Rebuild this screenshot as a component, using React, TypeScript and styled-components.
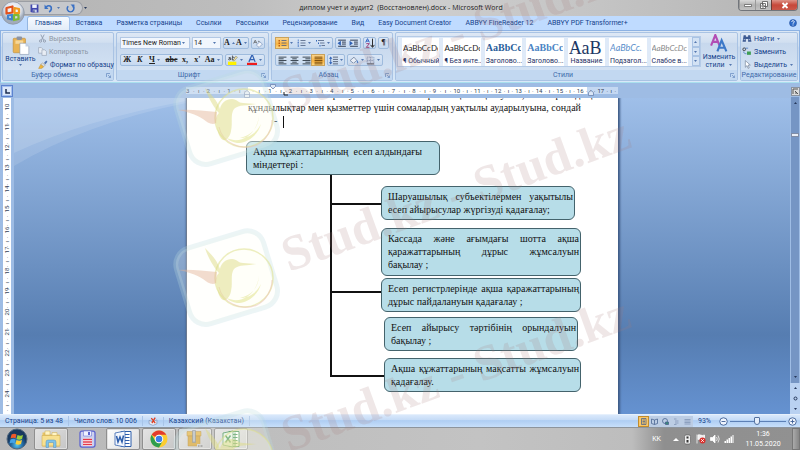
import React from 'react';
import styled, { createGlobalStyle, css } from 'styled-components';

const Global = createGlobalStyle`
  * { box-sizing: border-box; }
  body { margin: 0; font-family: Roboto, "Open Sans", sans-serif; font-size: 7px; line-height: 10px; color: #15428b; overflow: hidden; }
  button, select, input { font: inherit; color: inherit; margin: 0; padding: 0; border: 0; background: none; }
  svg { display: block; flex: none; }
`;

const Shell = styled.div`
  position: relative;
  display: flex;
  flex-direction: column;
  height: 100vh;
  overflow: hidden;
`;

/* ---------- title bar ---------- */
const TitleBar = styled.header`
  position: relative;
  display: flex;
  align-items: center;
  height: 16px;
  flex: none;
  padding-right: 2px;
  background: linear-gradient(90deg, #b4b4b4, #bdbdbd 30%, #cfcfcf 50%, #c4c4c4 75%, #b4b4b4);
`;
const QuickAccess = styled.div`
  display: flex;
  align-items: center;
  gap: 5px;
  height: 14px;
  margin-left: 18px;
  padding: 0 7px 0 12px;
  border: 1px solid #9b9ea4;
  border-left: 0;
  border-radius: 0 8px 8px 0;
  background: #c6c8cc;
`;
const PlainButton = styled.button`
  display: flex;
  align-items: center;
  justify-content: center;
  gap: 3px;
`;
const DocTitle = styled.h1`
  flex: 1;
  margin: 0;
  padding-right: 24px;
  font: 400 7px/16px "Open Sans", sans-serif;
  text-align: center;
  color: #222;
`;
const WindowButtons = styled.div`
  display: flex;
  align-self: flex-start;
  height: 11px;
  border: 1px solid #71757b;
  border-top: 0;
  border-radius: 0 0 4px 4px;
  overflow: hidden;
`;
const WindowButton = styled.button<{ $close?: boolean }>`
  display: grid;
  place-items: center;
  width: ${p => (p.$close ? 26 : 16)}px;
  border-left: ${p => (p.$close ? '1px solid #6b3a34' : '1px solid #999')};
  background: ${p => (p.$close ? 'linear-gradient(#dd9488, #c7483a 50%, #c9584a)' : 'linear-gradient(#d9d9d9, #b3b3b3 50%, #c2c2c2)')};
`;
const OfficeButton = styled.button`
  position: absolute;
  left: 1px;
  top: 1px;
  z-index: 3;
`;

/* ---------- tabs ---------- */
const Tabs = styled.nav`
  display: flex;
  align-items: flex-end;
  height: 14px;
  flex: none;
  padding: 0 3px 0 28px;
  background: #bfdbff;
`;
const Tab = styled.button<{ $active?: boolean }>`
  height: 13px;
  padding: 0 7px;
  line-height: 13px;
  white-space: nowrap;
  border-radius: 2px 2px 0 0;
  ${p => p.$active && css`
    background: linear-gradient(#f6faff, #e2ecf8);
    box-shadow: 0 0 0 1px #93b6e2;
    clip-path: inset(-1px -1px 0 -1px);
  `}
`;
const HelpButton = styled.button`
  margin: 0 0 3px auto;
`;

/* ---------- ribbon ---------- */
const Ribbon = styled.div`
  display: flex;
  gap: 2px;
  height: 53px;
  flex: none;
  padding: 1px;
  border: 1px solid #8db2e3;
  border-bottom-color: #a9e0ee;
  background: linear-gradient(#dbe7f5, #cfdff1 30%, #c5d7ec 31%, #d8e8f8);
`;
const Group = styled.section<{ $w?: number }>`
  display: flex;
  flex-direction: column;
  flex: ${p => (p.$w ? `0 0 ${p.$w}px` : '1 1 0')};
  min-width: 0;
  border: 1px solid #a9c3e4;
  border-radius: 2px;
  background: linear-gradient(#dee8f5, #d1dff0 20%, #c7d8ed 21%, #d7e5f5);
`;
const GroupBody = styled.div<{ $row?: boolean }>`
  display: flex;
  flex: 1;
  min-width: 0;
  flex-direction: ${p => (p.$row ? 'row' : 'column')};
  justify-content: ${p => (p.$row ? 'flex-start' : 'center')};
  align-items: ${p => (p.$row ? 'center' : 'stretch')};
  gap: ${p => (p.$row ? 1 : 5)}px;
  padding: 0 ${p => (p.$row ? 1 : 3)}px;
`;
const GroupFoot = styled.footer`
  display: flex;
  align-items: center;
  height: 10px;
  color: #3e6aaa;
  background: #c2d8f1;
  white-space: nowrap;
`;
const GroupName = styled.span`
  flex: 1;
  text-align: center;
`;
const FootButton = styled.button`
  padding-right: 2px;
`;
const BigButton = styled.button<{ $w: number }>`
  display: flex;
  flex-direction: column;
  align-items: center;
  flex: none;
  width: ${p => p.$w}px;
  line-height: 8px;
`;
const CommandList = styled.div`
  display: flex;
  flex-direction: column;
  gap: 3px;
`;
const Command = styled.button`
  display: flex;
  align-items: center;
  gap: 2px;
  height: 10px;
  white-space: nowrap;
  &:disabled { color: #8e98a6; }
`;
const ToolRow = styled.div`
  display: flex;
  gap: 2px;
  height: 12px;
`;
const Cluster = styled.div<{ $grow?: boolean }>`
  display: flex;
  flex: ${p => (p.$grow ? '1 1 0' : 'none')};
  justify-content: space-around;
  border: 1px solid #9ebbdd;
  border-radius: 2px;
  background: linear-gradient(#dbe7f6, #c6d9f0);
`;
const Tool = styled.button<{ $on?: boolean; $w?: number }>`
  display: flex;
  align-items: center;
  justify-content: center;
  gap: 1px;
  width: ${p => p.$w || 12}px;
  color: #222;
  font: 700 8px/10px "Liberation Serif", serif;
  ${p => p.$on && css`background: linear-gradient(#fbd48c, #f9b23f 60%, #fdd783); box-shadow: 0 0 0 1px #c9a25c;`}
`;
const Combo = styled.label<{ $w: number }>`
  display: flex;
  align-items: center;
  width: ${p => p.$w}px;
  padding: 0 3px 0 1px;
  border: 1px solid #b2c8e5;
  background: #f1f6fd;
  select { flex: 1; min-width: 0; appearance: none; color: #222; outline: none; }
`;
const Gallery = styled.div`
  display: flex;
  align-items: center;
  gap: 4px;
  flex: 1 1 0;
  min-width: 0;
  height: 31px;
  padding-left: 4px;
  border: 1px solid #b5cbe7;
  background: #dfeaf8;
`;
const StyleTile = styled.button`
  display: flex;
  flex-direction: column;
  justify-content: space-between;
  flex: 1 1 0;
  min-width: 0;
  height: 28px;
  padding: 2px 1px 1px;
  background: #fff;
  overflow: hidden;
`;
const Sample = styled.span<{ $size: number; $color: string; $serif?: boolean; $italic?: boolean }>`
  width: 100%;
  height: 16px;
  line-height: 16px;
  text-align: left;
  white-space: nowrap;
  overflow: hidden;
  font-family: ${p => (p.$serif ? '"Liberation Serif", serif' : 'Lato, sans-serif')};
  font-weight: ${p => (p.$serif && p.$size < 12 ? 700 : 400)};
  font-style: ${p => (p.$italic ? 'italic' : 'normal')};
  font-size: ${p => p.$size}px;
  color: ${p => p.$color};
`;
const StyleName = styled.span`
  width: 100%;
  line-height: 8px;
  text-align: center;
  white-space: nowrap;
  color: #1e2f63;
`;
const GalleryScroll = styled.div`
  display: flex;
  flex-direction: column;
  align-self: stretch;
  width: 8px;
  flex: none;
  button { display: grid; place-items: center; flex: 1; border: 1px solid #a9c3e4; background: #d3e2f4; }
`;

/* ---------- work area ---------- */
const Work = styled.main`
  display: flex;
  flex: 1;
  min-height: 0;
  background: #9ebce4;
`;
const LeftRail = styled.div`
  display: flex;
  flex-direction: column;
  align-items: center;
  width: 14px;
  flex: none;
  background: #9ebce4;
`;
const TabSelector = styled.button`
  display: grid;
  place-items: center;
  width: 12px;
  height: 12px;
  margin: 2px 0 1px;
  border: 1px solid #5d83cf;
  background: #dce8fa;
  box-shadow: inset 0 0 0 1px #a5c0ee;
  flex: none;
`;
const VerticalRuler = styled.div`
  display: flex;
  flex-direction: column;
  width: 8px;
  flex: 1;
  min-height: 0;
  padding: 6px 0 3px;
  overflow: hidden;
  background: #fff;
`;
const VerticalUnit = styled.div`
  display: flex;
  flex-direction: row-reverse;
  align-items: center;
  justify-content: space-between;
  flex: 1 0 20px;
  writing-mode: vertical-rl;
  transform: rotate(180deg);
  font-size: 6px;
  line-height: 8px;
  color: #333f57;
`;
const Middle = styled.div`
  display: flex;
  flex-direction: column;
  flex: 1;
  min-width: 0;
`;
const RulerBar = styled.div`
  display: flex;
  justify-content: center;
  height: 15px;
  flex: none;
  padding: 4px 0;
`;
const Ruler = styled.div`
  position: relative;
  display: grid;
  grid-template-columns: repeat(21, 1fr);
  width: 432px;
  height: 7px;
  background: linear-gradient(90deg, #c4d8f2 62px, #fff 62px, #fff 401px, #c4d8f2 401px);
`;
const RulerUnit = styled.div`
  display: flex;
  align-items: center;
  justify-content: space-between;
  padding-right: 2px;
  font-size: 6px;
  line-height: 7px;
  color: #333f57;
`;
const Marker = styled.svg<{ $x: number; $y: number }>`
  position: absolute;
  left: ${p => p.$x}px;
  top: ${p => p.$y}px;
`;
const Canvas = styled.div`
  position: relative;
  display: flex;
  justify-content: center;
  flex: 1;
  min-height: 0;
  overflow: hidden;
  background: linear-gradient(#9fbfe9, #567db1 75%, #6592d1);
`;
const Swoosh = styled.svg`
  position: absolute;
  left: 0;
  top: 0;
`;
const Page = styled.article`
  position: relative;
  width: 432px;
  height: 100%;
  background: #fff;
  border-left: 1px solid #6c7a90;
  box-shadow: 1px 0 2px 1px #3e5a85;
  font: 10px/13px "Liberation Serif", serif;
  color: #111;
`;
const Body = styled.div`
  margin: -10px 26px 0 61px;
`;
const Line = styled.p<{ $justify?: boolean; $indent?: number }>`
  margin: 0;
  padding-left: ${p => p.$indent || 0}px;
  white-space: nowrap;
  ${p => p.$justify && css`white-space: normal; text-align: justify; text-align-last: justify;`}
`;
const Caret = styled.span`
  display: inline-block;
  width: 1px;
  height: 12px;
  margin-left: 6px;
  vertical-align: middle;
  background: #111;
`;
const Connectors = styled.svg`
  position: absolute;
  left: 143px;
  top: 76px;
`;
const Node = styled.div<{ $x: number; $y: number; $w: number; $h?: number }>`
  position: absolute;
  left: ${p => p.$x}px;
  top: ${p => p.$y}px;
  width: ${p => p.$w}px;
  height: ${p => p.$h || 34}px;
  padding: 3px 1px 0 6px;
  border: 1px solid #44636c;
  border-radius: 6px;
  background: #b7dde8;
`;
const ScrollRail = styled.div`
  display: flex;
  flex-direction: column;
  align-items: center;
  width: 10px;
  flex: none;
  background: #9ebce4;
`;
const RulerToggle = styled.button`
  display: grid;
  place-items: center;
  width: 9px;
  height: 9px;
  margin: 4px 0 1px;
  background: #dcdcdc;
  border: 1px solid #8a93a0;
  flex: none;
`;
const ScrollTrack = styled.div`
  display: flex;
  flex-direction: column;
  align-items: center;
  flex: 1;
  width: 8px;
  padding: 4px 0;
  background: #7595c4;
`;
const Thumb = styled.div`
  width: 8px;
  height: 4px;
  margin: 28px 0 auto;
  border: 1px solid #7f8ca6;
  background: #e8edf6;
`;
const PageNav = styled.div`
  display: flex;
  flex-direction: column;
  align-items: center;
  justify-content: space-around;
  width: 10px;
  height: 31px;
  background: #b9d1f1;
`;

/* ---------- status bar ---------- */
const StatusBar = styled.footer`
  display: flex;
  align-items: center;
  height: 13px;
  flex: none;
  padding: 0 3px 0 5px;
  border-top: 1px solid #e6f0fc;
  background: linear-gradient(#d9e8fb, #c3daf6 45%, #aecdf3 46%, #c7dffa);
  white-space: nowrap;
`;
const StatusItem = styled.span`
  padding-right: 5px;
  margin-right: 5px;
  border-right: 1px solid #a8c4e8;
`;
const ViewButtons = styled.div`
  display: flex;
  margin: 0 5px 0 auto;
  background: #bccde4;
`;
const ViewButton = styled.button<{ $on?: boolean }>`
  display: grid;
  place-items: center;
  width: 11px;
  height: 11px;
  ${p => p.$on && css`background: #fbc766; box-shadow: inset 0 0 0 1px #c08c2f;`}
`;
const ZoomLabel = styled.label`
  margin-right: 8px;
`;
const ZoomSlider = styled.input`
  appearance: none;
  width: 56px;
  height: 10px;
  margin: 0 2px;
  background: linear-gradient(#5c80b6, #5c80b6) center / 100% 1px no-repeat;
  &::-webkit-slider-thumb { appearance: none; width: 6px; height: 8px; border: 1px solid #54719f; border-radius: 1px 1px 3px 3px; background: #e4eefb; }
`;

/* ---------- taskbar ---------- */
const Taskbar = styled.nav`
  display: flex;
  align-items: center;
  height: 23px;
  flex: none;
  background: linear-gradient(90deg, #b8b8b8, #c3c3c3 60%, #bdbdbd 79%, #8f8f8f 83%, #919191);
  border-top: 1px solid #8d949c;
  color: #fff;
`;
const StartButton = styled.button`
  display: grid;
  place-items: center;
  width: 34px;
`;
const TaskButton = styled.button<{ $frame?: boolean; $active?: boolean }>`
  display: grid;
  place-items: center;
  width: 34px;
  height: 22px;
  margin-right: 2px;
  border: 1px solid ${p => (p.$frame ? '#8f8f8f' : 'transparent')};
  border-radius: 2px;
  ${p => p.$frame && css`background: linear-gradient(135deg, #e3e3e3, #c6c6c6); box-shadow: inset 0 0 0 1px #e0e0e0;`}
  ${p => p.$active && css`background: linear-gradient(135deg, #fdfdfd, #dcdcdc);`}
`;
const Tray = styled.div`
  display: flex;
  align-items: center;
  gap: 4px;
  margin-left: auto;
`;
const Language = styled.span`
  margin-right: 8px;
`;
const Clock = styled.time`
  width: 50px;
  text-align: center;
  line-height: 10px;
`;
const ShowDesktop = styled.button`
  width: 8px;
  height: 22px;
  border: 1px solid #777;
  background: linear-gradient(90deg, #aaa, #868686);
`;

const Watermark = styled.svg`
  position: absolute;
  left: calc(50% - 400px);
  top: 0;
  z-index: 5;
  pointer-events: none;
`;

/* ---------- drawings ---------- */
const Arrow = ({ up, dark }: { up?: boolean; dark?: boolean }) => (
  <svg width="5" height="4" viewBox="0 0 5 4"><path d={up ? 'M1 3h3L2.5 1z' : 'M1 1h3L2.5 3z'} fill={dark ? '#27395c' : '#5578b0'} /></svg>
);
const Launcher = () => (
  <svg width="5" height="5" viewBox="0 0 10 10" fill="none" stroke="#6b8fc2" strokeWidth="1.5"><path d="M1 8V1h7M4 4l5 5M9 5v4H5" /></svg>
);
const Office = () => (
  <svg width="24" height="24" viewBox="0 0 48 48">
    <defs><radialGradient id="orb" cx=".5" cy=".35"><stop offset="0" stopColor="#fff" /><stop offset=".7" stopColor="#dfe4ec" /><stop offset="1" stopColor="#a2acbb" /></radialGradient></defs>
    <circle cx="24" cy="24" r="22.500" fill="url(#orb)" stroke="#8a93a3" strokeWidth="1.5" />
    <g fill="none" strokeWidth="4.500" strokeLinejoin="round">
      <path d="M11 14l12-3v12l-12 2z" stroke="#e2521d" /><path d="M27 14l9 2v8h-9z" stroke="#f09a1a" />
      <path d="M14 29l8-1v9l-8-2z" stroke="#3f82cf" /><path d="M26 28h9v8l-9 2z" stroke="#7fb935" />
    </g>
  </svg>
);
const Save = () => (
  <svg width="9" height="9" viewBox="0 0 16 16"><path d="M1 1h14v14H3l-2-2z" fill="#4147ad" /><path d="M4 1h8v6H4z" fill="#eef2fb" /><path d="M5 10h7v5H5z" fill="#c9d2ee" /><path d="M6 11h2v4H6z" fill="#262c74" /></svg>
);
const Undo = () => (
  <svg width="9" height="9" viewBox="0 0 16 16"><path d="M4 5c5-4 10-1 9 4-.4 2-2 4-4 5" fill="none" stroke="#3a70c4" strokeWidth="3" /><path d="M1 1v8h7z" fill="#3a70c4" /></svg>
);
const Redo = () => (
  <svg width="9" height="9" viewBox="0 0 16 16"><path d="M4 4c-4 4-1 10 4 10s8-6 4-10" fill="none" stroke="#3a70c4" strokeWidth="2.6" /><path d="M8 1h7v7z" fill="#3a70c4" /></svg>
);
const Paste = () => (
  <svg width="18" height="19" viewBox="0 0 32 34"><rect x="2" y="4" width="22" height="26" rx="2" fill="#e9b354" stroke="#b98632" /><rect x="8" y="1" width="10" height="6" rx="2" fill="#8c94a3" /><path d="M6 8h14v6H6z" fill="#f6d799" /><path d="M14 13h10l6 6v14H14z" fill="#fff" stroke="#7d8ea9" /><path d="M24 13v6h6z" fill="#c3d1e6" /></svg>
);
const Scissors = () => (
  <svg width="9" height="9" viewBox="0 0 16 16" fill="none" stroke="#8e9bae" strokeWidth="1.6"><path d="M5 1l5 10M11 1L6 11" /><circle cx="4.5" cy="12.5" r="2" /><circle cx="11.5" cy="12.5" r="2" /></svg>
);
const Copy = () => (
  <svg width="9" height="9" viewBox="0 0 16 16" fill="#e8edf4" stroke="#9aa6b8" strokeWidth="1.2"><path d="M1 1h5l3 3v7H1z" /><path d="M7 5h5l3 3v7H7z" /></svg>
);
const Brush = () => (
  <svg width="10" height="9" viewBox="0 0 18 16"><path d="M11 5l4-4 2 2-4 5z" fill="#4a6fae" /><path d="M8 5l5 4-3 3-5-4z" fill="#d9dde4" stroke="#7b6a3d" strokeWidth=".6" /><path d="M5 8l5 4c-2 3-5 4-9 3 1-1 2-4 4-7z" fill="#eeb53c" stroke="#a87a20" strokeWidth=".6" /></svg>
);
const Eraser = () => (
  <svg width="10" height="9" viewBox="0 0 18 16" fill="none"><path d="M1 8l3-6 3 6M2 6h4M9 4q3-1 3 3" stroke="#555" strokeWidth="1.200" /><path d="M6 11l6-6 5 4-6 6z" fill="#f3f6fb" stroke="#5f7dab" /></svg>
);
const Highlight = () => (
  <svg width="10" height="10" viewBox="0 0 18 18" fill="none"><path d="M1 5q4-2 4 1v3M5 6q-4 0-4 2t4 0M8 1v8q4 0 4-3t-4-2" stroke="#333" strokeWidth="1.300" /><path d="M9 10l5-8 3 2-6 7z" fill="#f7e9a0" stroke="#666" strokeWidth=".8" /><path d="M0 12h15v6H0z" fill="#fff200" /></svg>
);
const FontColor = () => (
  <svg width="10" height="10" viewBox="0 0 16 16"><path d="M3 11L7.500 1h1.500L13 11M5 7.500h6" fill="none" stroke="#3463b4" strokeWidth="2" /><path d="M0 12.500h16v3.500H0z" fill="#ee1c1c" /></svg>
);
const ListIcon = ({ kind }: { kind: 'dots' | 'nums' | 'tree' }) => (
  <svg width="9" height="8" viewBox="0 0 18 16">
    <path d={kind === 'tree' ? 'M4 3h12M8 8h9M11 13h7' : 'M7 3h10M7 8h10M7 13h10'} stroke="#4d5f80" strokeWidth="1.600" />
    {kind === 'dots' && <path d="M1 2h3v3H1zM1 7h3v3H1zM1 12h3v3H1z" fill="#c0600f" />}
    {kind === 'nums' && <path d="M2.500 1v4M1 7h3M1 10h3M2.500 12v4" stroke="#3466b8" strokeWidth="1.500" />}
    {kind === 'tree' && <path d="M0 2h2v3H0zM4 7h2v3H4zM7 12h2v3H7z" fill="#3466b8" />}
  </svg>
);
const Indent = ({ back }: { back?: boolean }) => (
  <svg width="10" height="9" viewBox="0 0 18 16"><path d="M2 2h14M9 5.500h7M9 9h7M2 13h14" stroke="#333f55" strokeWidth="1.800" /><path d={back ? 'M7 3v9L1 7.500z' : 'M1 3v9l6-4.500z'} fill="#2f61b5" /></svg>
);
const Sort = () => (
  <svg width="10" height="10" viewBox="0 0 16 16" fill="none" strokeWidth="1.500"><path d="M1 7l3-6 3 6M2 5h4" stroke="#2f5fc0" /><path d="M2 9h5l-5 6h5" stroke="#9b3a76" /><path d="M12 1v13M9 11l3 4 3-4" stroke="#222" /></svg>
);
const Align = ({ kind }: { kind: 'left' | 'center' | 'right' | 'full' }) => {
  const x = { left: 1, center: 4, right: 6, full: 1 }[kind];
  const w = kind === 'full' ? 14 : kind === 'center' ? 8 : 9;
  return <svg width="9" height="9" viewBox="0 0 16 16"><path d={`M1 2h14M${x} 5h${w}M1 8h14M${x} 11h${w}M1 14h14`} stroke={kind === 'full' ? '#7a4a0a' : '#39434f'} strokeWidth="1.700" /></svg>;
};
const Spacing = () => (
  <svg width="9" height="9" viewBox="0 0 16 16"><path d="M7 2h9M7 6h9M7 10h9M7 14h9" stroke="#48546a" strokeWidth="1.500" /><path d="M3 3v10" stroke="#2f61b5" strokeWidth="1.500" /><path d="M0 5l3-4 3 4zM0 11l3 4 3-4z" fill="#2f61b5" /></svg>
);
const Bucket = () => (
  <svg width="10" height="9" viewBox="0 0 18 16"><path d="M2 8l7-6 5 6-6 5z" fill="#e9eef6" stroke="#5b6d8c" strokeWidth="1.200" /><path d="M14 7c3 2 3 5 2 6-2 0-2-3-2-6z" fill="#4a7bc8" /><path d="M1 13.500h14v2H1z" fill="#fff" stroke="#99a" strokeWidth=".5" /></svg>
);
const Borders = () => (
  <svg width="9" height="9" viewBox="0 0 16 16" fill="none" stroke="#7c93b8" strokeWidth="1.300"><path d="M2 2h12v12H2zM8 2v12M2 8h12" strokeDasharray="2 1" /><path d="M2 14h12" stroke="#333" /></svg>
);
const ChangeStyles = () => (
  <svg width="18" height="19" viewBox="0 0 34 36" fill="none"><path d="M2 22L10 2l8 20M5 15h10" stroke="#b24db4" strokeWidth="4" /><path d="M14 33l8-21 9 21M17 26h11" stroke="#3c78c8" strokeWidth="4" /></svg>
);
const Binoculars = () => (
  <svg width="10" height="9" viewBox="0 0 18 16"><path d="M3 2h4v3h4V2h4l2 12h-6V9H7v5H1z" fill="#3d5a92" /><path d="M3 10h3M12 10h3" stroke="#b9c9e6" strokeWidth="1.500" /></svg>
);
const Replace = () => (
  <svg width="10" height="9" viewBox="0 0 18 16"><circle cx="4" cy="4" r="2.500" fill="none" stroke="#333" strokeWidth="1.500" /><path d="M6 2h5M3 8c0 3 2 4 5 4" stroke="#4a79c2" strokeWidth="1.500" fill="none" /><path d="M9 8h7v6H9z" fill="#3f9e53" /></svg>
);
const Pointer = () => (
  <svg width="10" height="9" viewBox="0 0 18 16"><path d="M6 1v12l3-3 2 5 2-1-2-5h4z" fill="#fff" stroke="#5a6a86" /></svg>
);
const Proof = () => (
  <svg width="10" height="9" viewBox="0 0 18 16"><path d="M2 6l7 3 7-4v7l-7 3-7-3z" fill="#e9eef8" stroke="#6b7fa5" /><path d="M6 2l7 9M13 1L7 11" stroke="#e23b1d" strokeWidth="2.200" /></svg>
);
const ViewIcon = ({ n }: { n: number }) => (
  <svg width="7" height="7" viewBox="0 0 14 14" fill="none" stroke={n > 2 ? '#7d92b3' : '#45608d'} strokeWidth="1.500">
    {n === 0 && <path d="M3 1h9v12H3zM5 4h5M5 7h5M5 10h5" />}
    {n === 1 && <path d="M1 2l6 2 6-2v9l-6 2-6-2zM7 4v9" />}
    {n === 2 && <><circle cx="6" cy="6" r="5" /><path d="M7 8h6v5H7z" fill="#3b8a78" /></>}
    {n === 3 && <path d="M2 2h5M4 6h7M4 10h7M2 13h5" />}
    {n === 4 && <path d="M1 3h12M1 6h12M1 9h12M1 12h12" />}
  </svg>
);
const ZoomSign = ({ plus }: { plus?: boolean }) => (
  <svg width="9" height="9" viewBox="0 0 18 18" stroke="#3d5e94" strokeWidth="1.800" fill="#eef4fd"><circle cx="9" cy="9" r="7.500" /><path d={plus ? 'M5 9h8M9 5v8' : 'M5 9h8'} /></svg>
);
const StartOrb = () => (
  <svg width="22" height="22" viewBox="0 0 44 44">
    <defs><radialGradient id="start" cx=".5" cy=".8"><stop offset="0" stopColor="#55c6f2" /><stop offset=".6" stopColor="#22669f" /><stop offset="1" stopColor="#18395f" /></radialGradient></defs>
    <circle cx="22" cy="22" r="20" fill="url(#start)" stroke="#51677d" strokeWidth="2" />
    <path d="M11 13c4-2 7-2 10 0l-2 8c-3-2-6-2-10 0z" fill="#ee5a2a" /><path d="M23 14c4 2 7 2 11 0l-2 8c-4 2-7 2-11 0z" fill="#9bcf3c" />
    <path d="M9 23c4-2 7-2 10 0l-2 8c-3-2-6-2-10 0z" fill="#43a3e8" /><path d="M21 24c4 2 7 2 11 0l-2 8c-4 2-7 2-11 0z" fill="#fccf37" />
  </svg>
);
const Folder = () => (
  <svg width="20" height="18" viewBox="0 0 40 36"><path d="M3 5h13l3 4h18v24H3z" fill="#e9c566" /><path d="M8 2h10v8H8zM22 5h10v8H22z" fill="#fff4c4" stroke="#c9a94e" /><path d="M2 11h36v21H2z" fill="#f8e08f" stroke="#caa64a" /><path d="M10 35V24q0-4 4-4h12q4 0 4 4v11h-5V25H15v10z" fill="#7fc3ea" stroke="#5391be" /></svg>
);
const Floppy = () => (
  <svg width="17" height="18" viewBox="0 0 34 36"><rect x="2" y="2" width="30" height="32" rx="4" fill="#cdd1ee" stroke="#5b62d0" strokeWidth="2.500" /><path d="M9 2h16v10H9z" fill="#f0f2ff" stroke="#5b62d0" /><path d="M18 4h4v6h-4z" fill="#5b62d0" /><path d="M8 17h18v15H8z" fill="#fff" /><path d="M8 19h18M8 24h18M8 29h18" stroke="#e3394b" strokeWidth="3" /></svg>
);
const OfficeDoc = ({ excel }: { excel?: boolean }) => {
  const c = excel ? '#2f8744' : '#2b5cab';
  return (
    <svg width="19" height="18" viewBox="0 0 38 36">
      <path d="M14 3h20v30H14z" fill="#fff" stroke={c} strokeWidth="2" /><path d="M18 9h13M18 15h13M18 21h13M18 27h13" stroke={c} strokeWidth="2.200" />
      {excel && <path d="M26 5v27" stroke={c} strokeWidth="2" />}
      <path d="M2 6l20-4v32L2 30z" fill={excel ? '#e4f1e4' : '#f2f6fd'} stroke={c} strokeWidth="1.500" />
      <path d={excel ? 'M7 11l10 14M17 11L7 25' : 'M5 12l3 12 4-10 4 10 3-13'} fill="none" stroke={c} strokeWidth="3" />
    </svg>
  );
};
const Chrome = () => (
  <svg width="18" height="18" viewBox="0 0 36 36"><circle cx="18" cy="18" r="17" fill="#fccd30" /><path d="M3.300 9.500A17 17 0 0 1 32.700 9.500H18a8.500 8.500 0 0 0-7.400 4.300z" fill="#e33b2e" /><path d="M3.300 9.500A17 17 0 0 0 18 35l7.400-12.800a8.500 8.500 0 0 1-14.800 0z" fill="#2f9e4f" /><circle cx="18" cy="18" r="8.500" fill="#fff" /><circle cx="18" cy="18" r="6.500" fill="#3d7fe8" /></svg>
);
const Archive = () => (
  <svg width="20" height="19" viewBox="0 0 40 38"><path d="M4 3h28v9H4z" fill="#e4ba57" stroke="#b48d3c" /><path d="M6 12h24v20H6z" fill="#d8ab48" stroke="#b48d3c" /><path d="M15 1h6v24h-6z" fill="#a8aeb4" stroke="#7c8288" /><path d="M18 3v20" stroke="#eee" strokeWidth="2" strokeDasharray="2 2" /><path d="M24 28h14v8H24z" fill="#cfcfcf" /><path d="M26 32h10" stroke="#888" strokeWidth="3" strokeDasharray="2 1" /></svg>
);

const Logo = ({ y }: { y: number }) => (
  <g transform={`translate(0 ${y})`}>
    <g transform="rotate(-17 227 277)">
      <rect x="181" y="238" width="91" height="79" rx="17" fill="#fffdf4" fillOpacity=".2" stroke="#b9dbe0" strokeOpacity=".28" strokeWidth="5" />
    </g>
    <circle cx="244" cy="278" r="29" fill="#fffef0" fillOpacity=".25" stroke="#dfe08c" strokeOpacity=".55" strokeWidth="1.500" />
    <path d="M219 287c3 15 22 25 38 18 10-5 15-16 15-25" fill="none" stroke="#ecc0b8" strokeOpacity=".5" strokeWidth="1.200" />
    <path d="M227 298c14 7 30-4 32-22-1 13-8 19-19 22 10 0 17-6 21-14-3 11-13 19-24 19-4-1-8-2-10-5z" fill="#dfe183" fillOpacity=".5" />
    <path d="M205 248c6 6 12 12 15 21 1-6 6-10 12-10 5 0 6 4 11 4l13 1c-9 2-17 0-22 5-4 6-1 14-3 22-1 6-5 10-8 9-5-3-5-10-7-17-1-5 1-8 3-10-4-4-11-15-14-25z" fill="#dddb85" fillOpacity=".5" />
    <path d="M178 270c13-1 25 1 39 2l-1 11c-4 3-9-1-13-4-8-5-15-7-25-9z" fill="#e2b194" fillOpacity=".45" />
  </g>
);
const Stamp = ({ y }: { y: number }) => (
  <text transform={`translate(289 ${y}) rotate(-20)`} fontFamily="Liberation Serif" fontWeight="700" fontSize="50" fill="#a87878" fillOpacity=".18">Stud.kz - Stud.kz</text>
);

const styleTiles: { sample: string; name: string; size: number; color: string; serif?: boolean; italic?: boolean }[] = [
  { sample: 'AaBbCcDc', name: '¶ Обычный', size: 8, color: '#222' },
  { sample: 'AaBbCcDc', name: '¶ Без инте...', size: 8, color: '#222' },
  { sample: 'AaBbCc', name: 'Заголово...', size: 10, color: '#2b5f9b', serif: true },
  { sample: 'AaBbCc', name: 'Заголово...', size: 10, color: '#4a84c4', serif: true },
  { sample: 'АаВ', name: 'Название', size: 18, color: '#1c3764', serif: true },
  { sample: 'AaBbCc.', name: 'Подзагол...', size: 9, color: '#5b8fcb', italic: true },
  { sample: 'AaBbCcDc', name: 'Слабое в...', size: 8, color: '#8a8a8a', italic: true },
];
const tabNames = ['Главная', 'Вставка', 'Разметка страницы', 'Ссылки', 'Рассылки', 'Рецензирование', 'Вид', 'Easy Document Creator', 'ABBYY FineReader 12', 'ABBYY PDF Transformer+'];
const rulerMarks = ['3', '2', '1', '', ...Array.from({ length: 17 }, (_, i) => String(i + 1))];
const verticalMarks = Array.from({ length: 15 }, (_, i) => String(i + 10));

const Foot = ({ children, plain }: { children: React.ReactNode; plain?: boolean }) => (
  <GroupFoot><GroupName>{children}</GroupName>{!plain && <FootButton aria-label="Параметры"><Launcher /></FootButton>}</GroupFoot>
);

export default function App() {
  return (
    <Shell>
      <Global />
      <OfficeButton aria-label="Office"><Office /></OfficeButton>
      <TitleBar>
        <QuickAccess>
          <PlainButton aria-label="Сохранить"><Save /></PlainButton>
          <PlainButton aria-label="Отменить"><Undo /><Arrow /></PlainButton>
          <PlainButton aria-label="Вернуть"><Redo /></PlainButton>
        </QuickAccess>
        <PlainButton aria-label="Настройка панели"><Arrow dark /></PlainButton>
        <DocTitle>диплом учет и аудит2&nbsp; (Восстановлен).docx - Microsoft Word</DocTitle>
        <WindowButtons>
          <WindowButton aria-label="Свернуть"><svg width="8" height="6" viewBox="0 0 8 6"><path d="M.5 2.500h7v2h-7z" fill="#fff" stroke="#555" strokeWidth=".7" /></svg></WindowButton>
          <WindowButton aria-label="Восстановить"><svg width="8" height="8" viewBox="0 0 8 8" fill="#fff" stroke="#555" strokeWidth=".8"><path d="M2.500.5h5v5h-5zM.5 2.500h5v5h-5z" /><path d="M2 4h2v2H2z" /></svg></WindowButton>
          <WindowButton $close aria-label="Закрыть"><svg width="8" height="7" viewBox="0 0 8 7"><path d="M1.500 1l5 5M6.500 1l-5 5" stroke="#fff" strokeWidth="1.800" /></svg></WindowButton>
        </WindowButtons>
      </TitleBar>
      <Tabs>
        {tabNames.map((t, i) => <Tab key={t} $active={i === 0}>{t}</Tab>)}
        <HelpButton aria-label="Справка"><svg width="8" height="8" viewBox="0 0 16 16"><circle cx="8" cy="8" r="7" fill="#2f6cc9" stroke="#1c4790" /><path d="M5.500 6c0-4 5-3 5-.5 0 2-2.500 2-2.500 4M8 11v2" stroke="#fff" strokeWidth="1.800" fill="none" /></svg></HelpButton>
      </Tabs>
      <Ribbon>
        <Group $w={112}>
          <GroupBody $row>
            <BigButton $w={33}><Paste />Вставить<Arrow /></BigButton>
            <CommandList>
              <Command disabled><Scissors />Вырезать</Command>
              <Command disabled><Copy />Копировать</Command>
              <Command><Brush />Формат по образцу</Command>
            </CommandList>
          </GroupBody>
          <Foot>Буфер обмена</Foot>
        </Group>
        <Group $w={153}>
          <GroupBody>
            <ToolRow>
              <Combo $w={72}><select aria-label="Шрифт"><option>Times New Roman</option></select><Arrow /></Combo>
              <Combo $w={32}><select aria-label="Размер"><option>14</option></select><Arrow /></Combo>
              <Cluster $grow><Tool>A<Arrow up /></Tool><Tool>A<Arrow /></Tool></Cluster>
              <Cluster><Tool aria-label="Очистить формат"><Eraser /></Tool></Cluster>
            </ToolRow>
            <ToolRow>
              <Cluster $grow>
                <Tool>Ж</Tool><Tool><i>К</i></Tool><Tool $w={18}><u>Ч</u><Arrow /></Tool><Tool $w={14}><s>abc</s></Tool><Tool>x,</Tool><Tool>x'</Tool><Tool $w={18}>Aa<Arrow /></Tool>
              </Cluster>
              <Cluster><Tool $w={19} aria-label="Выделение цветом"><Highlight /><Arrow /></Tool><Tool $w={19} aria-label="Цвет текста"><FontColor /><Arrow /></Tool></Cluster>
            </ToolRow>
          </GroupBody>
          <Foot>Шрифт</Foot>
        </Group>
        <Group $w={122}>
          <GroupBody>
            <ToolRow>
              <Cluster><Tool $on aria-label="Маркеры"><ListIcon kind="dots" /></Tool><Tool $w={7} aria-label="Виды маркеров"><Arrow /></Tool><Tool $w={19} aria-label="Нумерация"><ListIcon kind="nums" /><Arrow /></Tool><Tool $w={18} aria-label="Список"><ListIcon kind="tree" /><Arrow /></Tool></Cluster>
              <Cluster><Tool aria-label="Уменьшить отступ"><Indent back /></Tool><Tool aria-label="Увеличить отступ"><Indent /></Tool></Cluster>
              <Cluster><Tool $w={11} aria-label="Сортировка"><Sort /></Tool></Cluster>
              <Cluster><Tool $w={9}>¶</Tool></Cluster>
            </ToolRow>
            <ToolRow>
              <Cluster><Tool aria-label="По левому краю"><Align kind="left" /></Tool><Tool aria-label="По центру"><Align kind="center" /></Tool><Tool aria-label="По правому краю"><Align kind="right" /></Tool><Tool $on aria-label="По ширине"><Align kind="full" /></Tool></Cluster>
              <Cluster><Tool $w={16} aria-label="Интервал"><Spacing /><Arrow /></Tool></Cluster>
              <Cluster><Tool $w={17} aria-label="Заливка"><Bucket /><Arrow /></Tool><Tool $w={17} aria-label="Границы"><Borders /><Arrow /></Tool></Cluster>
            </ToolRow>
          </GroupBody>
          <Foot>Абзац</Foot>
        </Group>
        <Group>
          <GroupBody $row>
            <Gallery>
              {styleTiles.map((s, i) => (
                <StyleTile key={i}><Sample $size={s.size} $color={s.color} $serif={s.serif} $italic={s.italic}>{s.sample}</Sample><StyleName>{s.name}</StyleName></StyleTile>
              ))}
              <GalleryScroll><button aria-label="Вверх"><Arrow up /></button><button aria-label="Вниз"><Arrow /></button><button aria-label="Ещё"><Arrow /></button></GalleryScroll>
            </Gallery>
            <BigButton $w={34}><ChangeStyles />Изменить<PlainButton as="span">стили<Arrow /></PlainButton></BigButton>
          </GroupBody>
          <Foot>Стили</Foot>
        </Group>
        <Group $w={58}>
          <GroupBody $row>
            <CommandList>
              <Command><Binoculars />Найти<Arrow /></Command>
              <Command><Replace />Заменить</Command>
              <Command><Pointer />Выделить<Arrow /></Command>
            </CommandList>
          </GroupBody>
          <Foot plain>Редактирование</Foot>
        </Group>
      </Ribbon>
      <Work>
        <LeftRail>
          <TabSelector aria-label="Табуляция"><svg width="5" height="5" viewBox="0 0 5 5"><path d="M1 0v4h4" fill="none" stroke="#1d2c50" strokeWidth="1.500" /></svg></TabSelector>
          <VerticalRuler>{verticalMarks.map(m => <VerticalUnit key={m}><span>{m}</span><span>·</span><span>ı</span><span>·</span></VerticalUnit>)}</VerticalRuler>
        </LeftRail>
        <Middle>
          <RulerBar>
            <Ruler>
              {rulerMarks.map((m, i) => <RulerUnit key={i}><span>{m}</span><span>·</span><span>ı</span><span>·</span></RulerUnit>)}
              <Marker $x={84} $y={-3} width="6" height="6" viewBox="0 0 6 6"><path d="M.5.5h5v2L3 5 .5 2.500z" fill="#dbe6f6" stroke="#6b84ae" strokeWidth=".8" /></Marker>
              <Marker $x={58} $y={3} width="6" height="8" viewBox="0 0 6 8"><path d="M3 .5l2.500 2v5h-5v-5zM.5 4.500h5" fill="#dbe6f6" stroke="#6b84ae" strokeWidth=".8" /></Marker>
              <Marker $x={402} $y={3} width="6" height="6" viewBox="0 0 6 6"><path d="M3 .5l2.500 2v3h-5v-3z" fill="#dbe6f6" stroke="#6b84ae" strokeWidth=".8" /></Marker>
              <Marker $x={97} $y={5} width="5" height="4" viewBox="0 0 5 4"><path d="M1 0v3h4" fill="none" stroke="#222" /></Marker>
            </Ruler>
          </RulerBar>
          <Canvas>
            <Swoosh width="172" height="70" viewBox="0 0 172 70"><path d="M0 0h172v5Q70 26 0 68z" fill="#fff" fillOpacity=".12" /><path d="M0 0h172v3Q70 22 0 55z" fill="#fff" fillOpacity=".13" /></Swoosh>
            <Page>
              <Body>
                <Line $justify $indent={36}>Есеп айырысу – төлем тәртібінің сақталуына, материалдық</Line>
                <Line>құндылықтар мен қызметтер үшін сомалардың уақтылы аударылуына, сондай</Line>
                <Line $indent={26}>-<Caret /></Line>
              </Body>
              <Connectors width="56" height="204" viewBox="0 0 56 204"><path d="M1 0v202h54M1 30h52M1 118h52" fill="none" stroke="#111" strokeWidth="2" /></Connectors>
              <Node $x={59} $y={43} $w={194}><Line>Ақша құжаттарынның&nbsp; есеп алдындағы</Line><Line>міндеттері :</Line></Node>
              <Node $x={194} $y={88} $w={194}><Line $justify>Шаруашылық субъектілермен уақытылы</Line><Line>есеп айырысулар жүргізуді қадағалау;</Line></Node>
              <Node $x={194} $y={130} $w={200} $h={48}><Line $justify>Кассада және ағымдағы шотта ақша</Line><Line $justify>қаражаттарының дұрыс жұмсалуын</Line><Line>бақылау ;</Line></Node>
              <Node $x={194} $y={180} $w={200}><Line $justify>Есеп регистрлерінде ақша қаражаттарының</Line><Line>дұрыс пайдалануын қадағалау ;</Line></Node>
              <Node $x={197} $y={219} $w={194}><Line $justify>Есеп айырысу тәртібінің орындалуын</Line><Line>бақылау ;</Line></Node>
              <Node $x={197} $y={260} $w={197}><Line $justify>Ақша құжаттарының мақсатты жұмсалуын</Line><Line>қадағалау.</Line></Node>
            </Page>
          </Canvas>
        </Middle>
        <ScrollRail>
          <RulerToggle aria-label="Линейка"><svg width="7" height="7" viewBox="0 0 7 7"><path d="M1 1h5M1 1v5M3 3l3 3M3 5h2" stroke="#555" fill="none" /></svg></RulerToggle>
          <ScrollTrack><Arrow up dark /><Thumb /><Arrow dark /></ScrollTrack>
          <PageNav><Arrow up dark /><svg width="5" height="5" viewBox="0 0 5 5"><circle cx="2.500" cy="2.500" r="1.500" fill="none" stroke="#27395c" /></svg><Arrow dark /></PageNav>
        </ScrollRail>
      </Work>
      <StatusBar>
        <StatusItem>Страница: 5 из 48</StatusItem>
        <StatusItem>Число слов: 10 006</StatusItem>
        <StatusItem><Proof /></StatusItem>
        <StatusItem>Казахский (Казахстан)</StatusItem>
        <ViewButtons>{[0, 1, 2, 3, 4].map(n => <ViewButton key={n} $on={n === 0} aria-label={`Режим ${n + 1}`}><ViewIcon n={n} /></ViewButton>)}</ViewButtons>
        <ZoomLabel htmlFor="zoom">93%</ZoomLabel>
        <PlainButton aria-label="Мельче"><ZoomSign /></PlainButton>
        <ZoomSlider id="zoom" type="range" min="10" max="180" defaultValue="93" />
        <PlainButton aria-label="Крупнее"><ZoomSign plus /></PlainButton>
      </StatusBar>
      <Taskbar>
        <StartButton aria-label="Пуск"><StartOrb /></StartButton>
        <TaskButton $frame aria-label="Проводник"><Folder /></TaskButton>
        <TaskButton aria-label="Дискета"><Floppy /></TaskButton>
        <TaskButton $frame $active aria-label="Word"><OfficeDoc /></TaskButton>
        <TaskButton $frame aria-label="Chrome"><Chrome /></TaskButton>
        <TaskButton $frame aria-label="Архив"><Archive /></TaskButton>
        <TaskButton $frame aria-label="Excel"><OfficeDoc excel /></TaskButton>
        <Tray>
          <Language>KK</Language>
          <svg width="6" height="5" viewBox="0 0 6 5"><path d="M0 4h6L3 1z" fill="#fff" /></svg>
          <svg width="9" height="11" viewBox="0 0 18 22"><rect x="3" y="2" width="12" height="18" rx="3" fill="#eee" stroke="#444" /><path d="M7 5h4v4H7zM7 12h4v5H7z" fill="#333" /></svg>
          <svg width="10" height="10" viewBox="0 0 20 20"><path d="M2 1v18M4 2c4-2 7 3 13 0v9c-6 3-9-2-13 0z" fill="#eee" stroke="#fff" strokeWidth="1.500" /><circle cx="13" cy="13" r="6" fill="#d8302c" /><path d="M10.500 10.500l5 5M15.500 10.500l-5 5" stroke="#fff" strokeWidth="2" /></svg>
          <svg width="10" height="10" viewBox="0 0 20 20" fill="none" stroke="#fff" strokeWidth="1.500"><path d="M1 7h4l5-5v16l-5-5H1z" fill="#fff" /><path d="M13 6q3 4 0 8M16 3q5 7 0 14" /></svg>
          <svg width="10" height="10" viewBox="0 0 20 20" fill="#fff"><path d="M1 14h3v4H1zM5 11h3v7H5zM9 8h3v10H9zM13 5h3v13h-3zM17 2h2v16h-2z" /></svg>
          <Clock>1:36<br />11.05.2020</Clock>
          <ShowDesktop aria-label="Показать рабочий стол" />
        </Tray>
      </Taskbar>
      <Watermark width="800" height="450" viewBox="0 0 800 450" aria-hidden="true">
        <Logo y={-160} /><Logo y={0} /><Logo y={180} />
        <Stamp y={112} /><Stamp y={272} /><Stamp y={452} />
      </Watermark>
    </Shell>
  );
}
